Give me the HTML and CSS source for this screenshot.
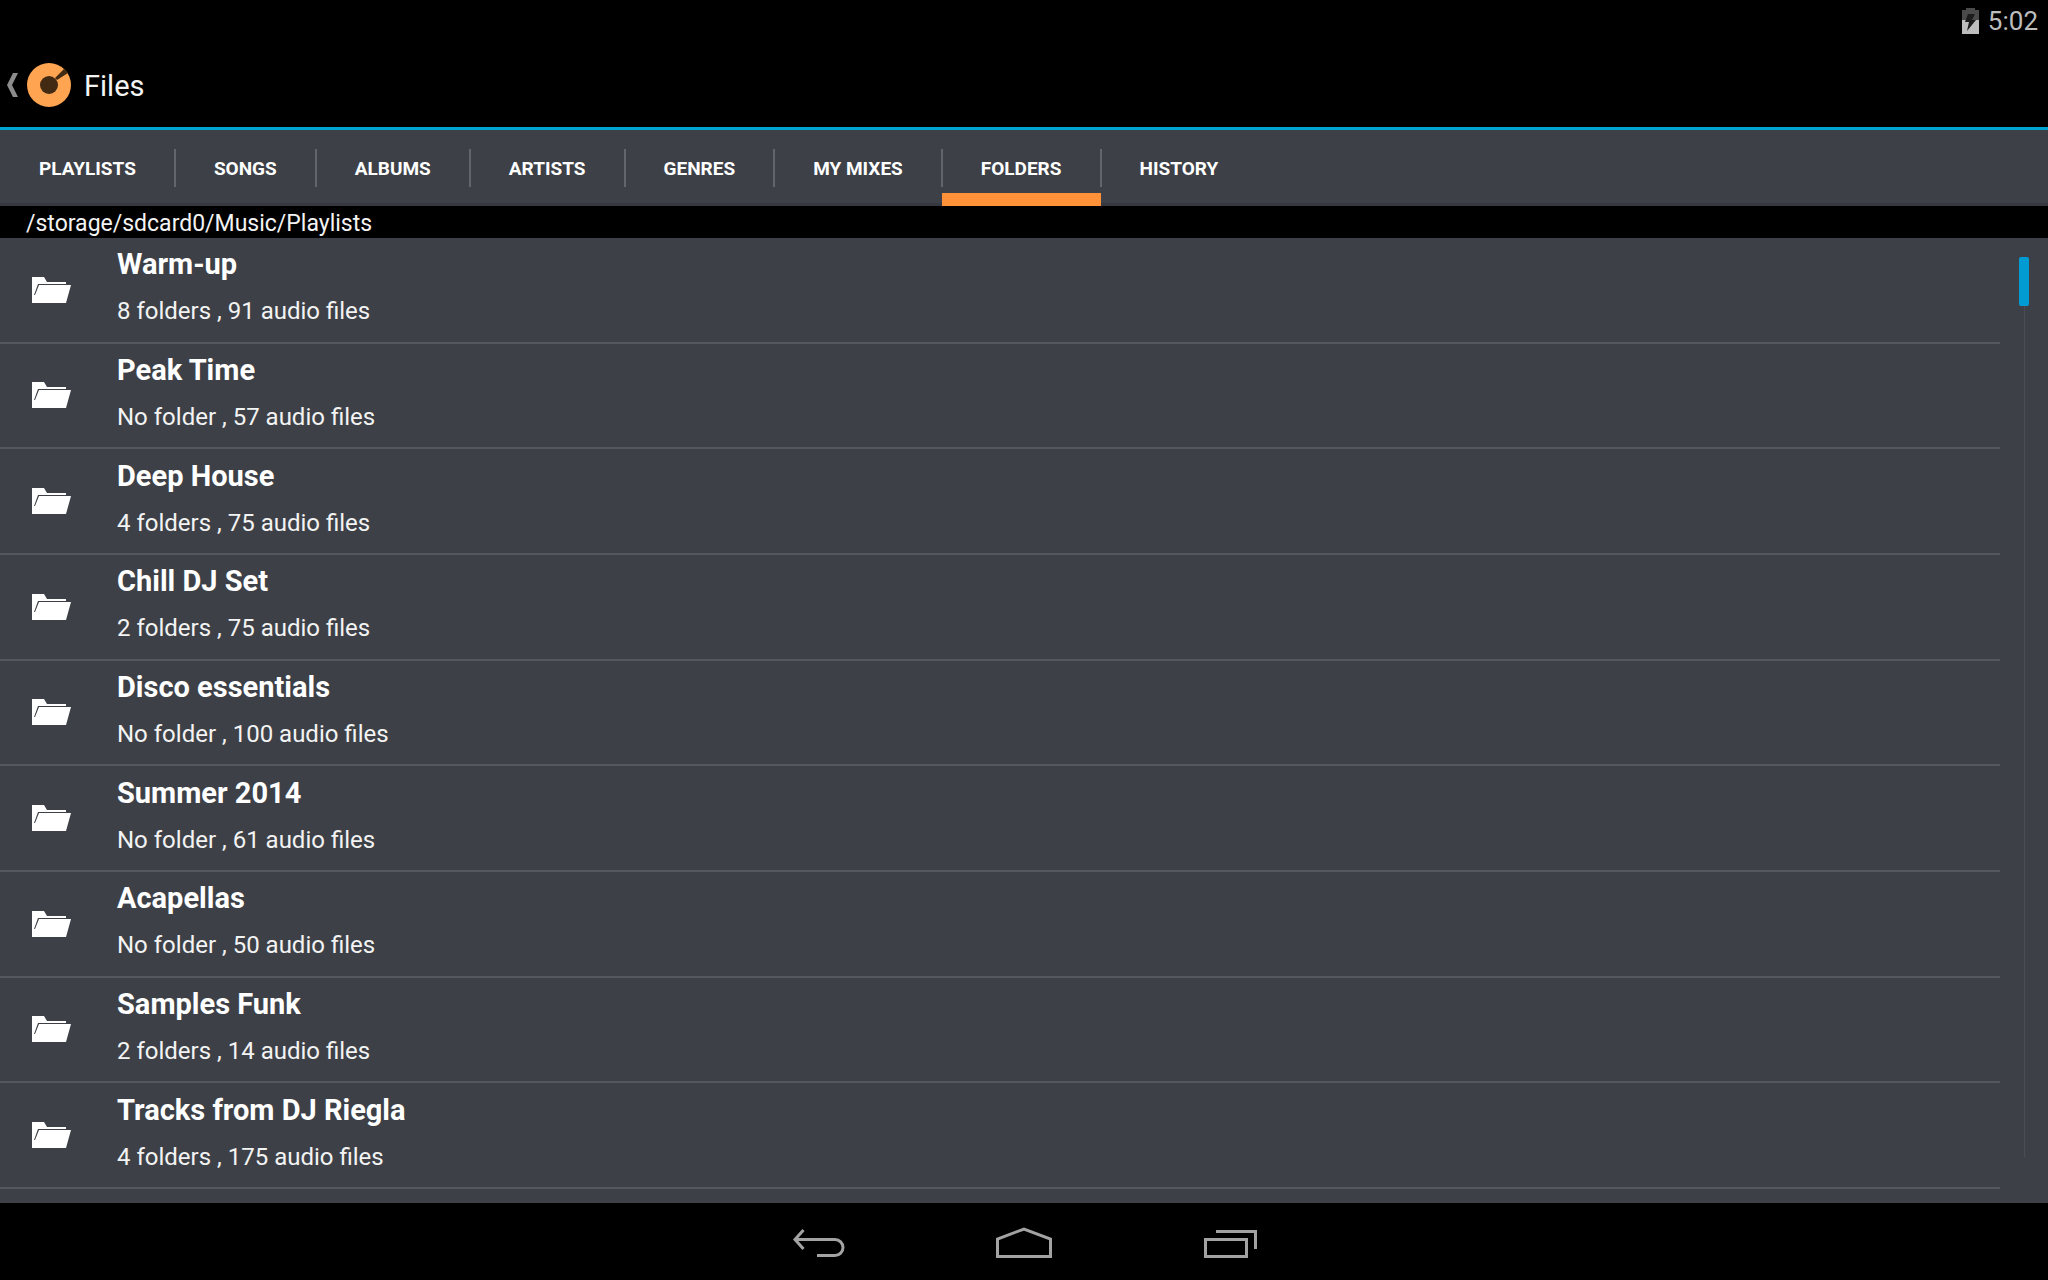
FILE: index.html
```
<!DOCTYPE html>
<html lang="en">
<head>
    <meta charset="UTF-8">
    <meta name="viewport" content="width=device-width, initial-scale=1.0">
    <title>Files</title>
    <link rel="stylesheet" href="styles.css">
</head>
<body>
    <svg class="symbols">
        <symbol id="folder" viewBox="0 0 40 28">
            <path fill="#fff" d="M0 1h12l3 5h19v2H6L2 19h1L7 9h32l-5 18H0z"/>
        </symbol>
    </svg>

    <div class="status-bar">
        <svg class="battery" width="17" height="26" viewBox="0 0 17 26">
            <path fill="#4a4a4a" d="M0 2h4V0h9v2h4v10H0z"/>
            <path fill="#bdbdbd" d="M0 12h17v14H0z"/>
            <path fill="#1c1c1c" d="M6 6h7l-3 6h4L5 23l2-9H3z"/>
        </svg>
        <span class="clock">5:02</span>
    </div>

    <header class="action-bar">
        <button type="button" class="up" aria-label="Back">
            <svg width="12" height="24" viewBox="0 0 12 24">
                <path fill="#8c8c8c" d="M6 0h5L5 12l6 12H6L0 12z"/>
            </svg>
            <svg class="logo" width="44" height="44" viewBox="0 0 44 44">
                <circle cx="22" cy="22" r="22" fill="#ffa451"/>
                <path fill="#432a12" d="M28 15L37 6q3 2 4 4L30 17z"/>
                <circle cx="22" cy="22" r="9" fill="#432a12"/>
            </svg>
        </button>
        <h1>Files</h1>
    </header>

    <nav class="tabs">
        <a href="#">PLAYLISTS</a>
        <a href="#">SONGS</a>
        <a href="#">ALBUMS</a>
        <a href="#">ARTISTS</a>
        <a href="#">GENRES</a>
        <a href="#">MY MIXES</a>
        <a href="#" class="active">FOLDERS</a>
        <a href="#">HISTORY</a>
    </nav>

    <div class="path">/storage/sdcard0/Music/Playlists</div>

    <main class="browser">
        <ul class="folders">
            <li>
                <svg class="icon"><use href="#folder"/></svg>
                <div class="info">
                    <h2>Warm-up</h2>
                    <p>8 folders , 91 audio files</p>
                </div>
            </li>
            <li>
                <svg class="icon"><use href="#folder"/></svg>
                <div class="info">
                    <h2>Peak Time</h2>
                    <p>No folder , 57 audio files</p>
                </div>
            </li>
            <li>
                <svg class="icon"><use href="#folder"/></svg>
                <div class="info">
                    <h2>Deep House</h2>
                    <p>4 folders , 75 audio files</p>
                </div>
            </li>
            <li>
                <svg class="icon"><use href="#folder"/></svg>
                <div class="info">
                    <h2>Chill DJ Set</h2>
                    <p>2 folders , 75 audio files</p>
                </div>
            </li>
            <li>
                <svg class="icon"><use href="#folder"/></svg>
                <div class="info">
                    <h2>Disco essentials</h2>
                    <p>No folder , 100 audio files</p>
                </div>
            </li>
            <li>
                <svg class="icon"><use href="#folder"/></svg>
                <div class="info">
                    <h2>Summer 2014</h2>
                    <p>No folder , 61 audio files</p>
                </div>
            </li>
            <li>
                <svg class="icon"><use href="#folder"/></svg>
                <div class="info">
                    <h2>Acapellas</h2>
                    <p>No folder , 50 audio files</p>
                </div>
            </li>
            <li>
                <svg class="icon"><use href="#folder"/></svg>
                <div class="info">
                    <h2>Samples Funk</h2>
                    <p>2 folders , 14 audio files</p>
                </div>
            </li>
            <li>
                <svg class="icon"><use href="#folder"/></svg>
                <div class="info">
                    <h2>Tracks from DJ Riegla</h2>
                    <p>4 folders , 175 audio files</p>
                </div>
            </li>
        </ul>
        <div class="scrollbar">
            <div class="thumb"></div>
            <div class="track"></div>
        </div>
    </main>

    <footer class="nav-bar">
        <button type="button" aria-label="Back">
            <svg width="64" height="37" viewBox="0 0 64 37">
                <path d="M9 16.500H49a8 8 0 0 1 0 16H31M17.500 7L9 16.500L17.500 26"/>
            </svg>
        </button>
        <button type="button" aria-label="Home">
            <svg width="64" height="37" viewBox="0 0 64 37">
                <path d="M5.500 33.500V16L32 6l26.500 10V33.500z"/>
            </svg>
        </button>
        <button type="button" aria-label="Recent apps">
            <svg width="64" height="37" viewBox="0 0 64 37">
                <path d="M7.500 16.500h41v17h-41zM18 8.500h39.500V26"/>
            </svg>
        </button>
    </footer>
</body>
</html>
```
FILE: styles.css
```
* {
    box-sizing: border-box;
    margin: 0;
    padding: 0;
}

body {
    display: flex;
    flex-direction: column;
    min-height: 100vh;
    background-color: #000;
    color: #fff;
    font-family: Roboto, sans-serif;
}

button {
    background: none;
    border: none;
}

svg {
    display: block;
}

.symbols {
    display: none;
}

.status-bar {
    display: flex;
    justify-content: flex-end;
    align-items: center;
    gap: 9px;
    height: 42px;
    padding-right: 10px;
}

.clock {
    font-size: 26px;
    color: #bdbdbd;
}

.action-bar {
    display: flex;
    align-items: center;
    gap: 13px;
    height: 88px;
    padding-left: 7px;
    border-bottom: 3px solid #00a5d3;
}

.up {
    display: flex;
    align-items: center;
    gap: 8px;
}

.action-bar h1 {
    padding-top: 2px;
    font-size: 29px;
    font-weight: 400;
    color: #f3f3f3;
}

.tabs {
    display: flex;
    height: 76px;
    background-color: #3d4147;
    border-bottom: 3px solid #363840;
}

.tabs a {
    position: relative;
    padding: 0 39px;
    line-height: 78px;
    font-size: 19px;
    font-weight: 700;
    color: #fff;
    text-decoration: none;
}

/* divider between two tabs */
.tabs a + a::before {
    content: "";
    position: absolute;
    left: -1px;
    top: 19px;
    width: 2px;
    height: 38px;
    background-color: #62656c;
}

.tabs .active::after {
    content: "";
    position: absolute;
    left: 0;
    right: 0;
    bottom: -3px;
    height: 13px;
    background-color: #ff9138;
}

.path {
    padding: 4px 0 0 26px;
    font-size: 23px;
    line-height: 28px;
    color: #f3f3f3;
}

.browser {
    flex: 1;
    display: flex;
    padding-bottom: 14px;
    background-color: #3d4147;
}

.folders {
    flex: 1;
    display: grid;
    grid-auto-rows: 1fr;
    list-style: none;
}

.folders li {
    display: flex;
    align-items: center;
    gap: 45px;
    padding-left: 32px;
    border-bottom: 2px solid #54575c;
}

.icon {
    width: 40px;
    height: 28px;
}

.info {
    padding-bottom: 3px;
}

.folders h2 {
    font-size: 29px;
    line-height: 47px;
    font-weight: 700;
}

.folders p {
    font-size: 24px;
    line-height: 47px;
    color: #f3f3f3;
}

.scrollbar {
    display: flex;
    flex-direction: column;
    align-items: center;
    width: 48px;
    padding: 19px 0 32px;
}

.thumb {
    width: 10px;
    height: 49px;
    border-radius: 2px;
    background-color: #009bd2;
}

.track {
    flex: 1;
    width: 1px;
    background-color: #4a4d52;
}

.nav-bar {
    display: flex;
    justify-content: center;
    height: 77px;
}

.nav-bar button {
    display: flex;
    justify-content: center;
    align-items: center;
    width: 206px;
}

.nav-bar path {
    fill: none;
    stroke: #a3a3a3;
    stroke-width: 3;
}
```
